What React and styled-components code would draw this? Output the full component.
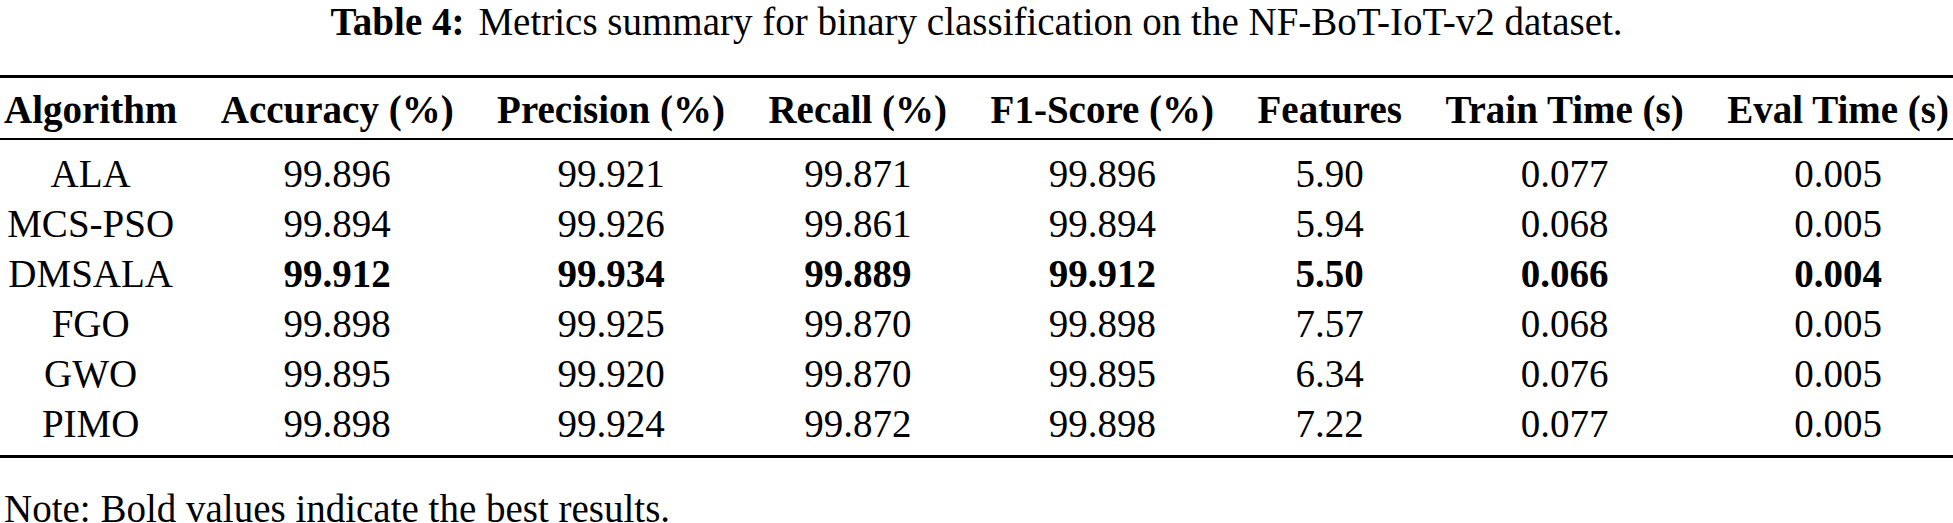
import styled, { createGlobalStyle } from 'styled-components';

const GlobalStyle = createGlobalStyle`
  html, body {
    margin: 0;
    padding: 0;
    background: #ffffff;
  }
  body {
    font-family: "Liberation Serif", "Times New Roman", serif;
    color: #000;
  }
`;

const Page = styled.div`
  width: 1953px;
  padding: 0 4px;
  box-sizing: border-box;
`;

const Caption = styled.div`
  text-align: center;
  font-size: 39px;
  line-height: 44px;
  white-space: nowrap;
`;

const CaptionLabel = styled.span`
  font-weight: 700;
  margin-right: 14px;
`;

const Grid = styled.div`
  display: grid;
  grid-template-columns: repeat(8, auto);
  justify-content: space-between;
  justify-items: center;
  margin: 31px -4px 0;
  padding: 0 4px;
  font-size: 39px;
  line-height: 50px;
`;

const Rule = styled.div`
  grid-column: 1 / -1;
  justify-self: stretch;
  margin: 0 -4px;
  height: ${({ $thin }) => ($thin ? '2px' : '3px')};
  background: #000;
`;

const HeadCell = styled.div`
  font-weight: 700;
  white-space: nowrap;
  padding: 7px 0 3px;
`;

const Cell = styled.div`
  white-space: nowrap;
  font-weight: ${({ $bold }) => ($bold ? 700 : 400)};
  padding-top: ${({ $first }) => ($first ? '9px' : '0')};
  padding-bottom: ${({ $last }) => ($last ? '6px' : '0')};
`;

const Note = styled.div`
  font-size: 39px;
  line-height: 40px;
  margin-top: 31px;
  white-space: nowrap;
`;

const headers = [
  'Algorithm',
  'Accuracy (%)',
  'Precision (%)',
  'Recall (%)',
  'F1-Score (%)',
  'Features',
  'Train Time (s)',
  'Eval Time (s)',
];

const rows = [
  ['ALA', '99.896', '99.921', '99.871', '99.896', '5.90', '0.077', '0.005'],
  ['MCS-PSO', '99.894', '99.926', '99.861', '99.894', '5.94', '0.068', '0.005'],
  ['DMSALA', '99.912', '99.934', '99.889', '99.912', '5.50', '0.066', '0.004', true],
  ['FGO', '99.898', '99.925', '99.870', '99.898', '7.57', '0.068', '0.005'],
  ['GWO', '99.895', '99.920', '99.870', '99.895', '6.34', '0.076', '0.005'],
  ['PIMO', '99.898', '99.924', '99.872', '99.898', '7.22', '0.077', '0.005'],
];

export default function App() {
  return (
    <>
      <GlobalStyle />
      <Page>
        <Caption>
          <CaptionLabel>Table 4:</CaptionLabel>
          Metrics summary for binary classification on the NF-BoT-IoT-v2 dataset.
        </Caption>
        <Grid>
          <Rule />
          {headers.map((h) => (
            <HeadCell key={h}>{h}</HeadCell>
          ))}
          <Rule $thin />
          {rows.map((row, r) =>
            row.slice(0, 8).map((val, c) => (
              <Cell
                key={`${r}-${c}`}
                $bold={row[8] && c > 0}
                $first={r === 0}
                $last={r === rows.length - 1}
              >
                {val}
              </Cell>
            ))
          )}
          <Rule />
        </Grid>
        <Note>Note: Bold values indicate the best results.</Note>
      </Page>
    </>
  );
}
